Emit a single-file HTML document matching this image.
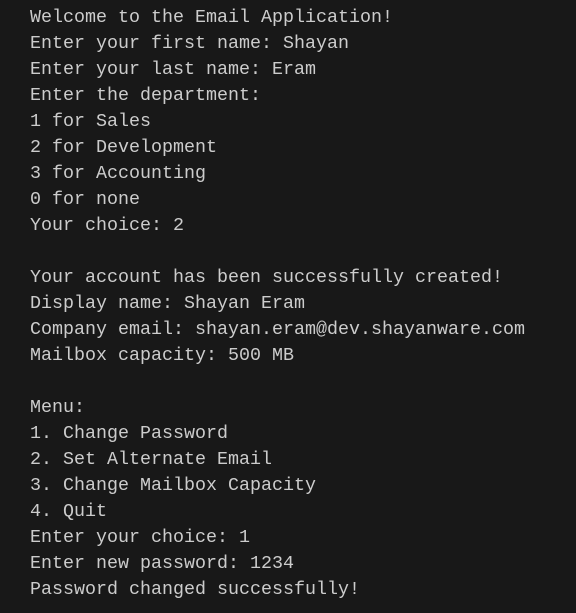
<!DOCTYPE html>
<html><head><style>
html,body{margin:0;padding:0;background:#181818;width:576px;height:613px;overflow:hidden}
pre{margin:0;position:absolute;left:30px;top:5px;font-family:"Liberation Mono",monospace;font-size:18.33px;line-height:26px;color:#cccccc}
</style></head><body>
<pre>Welcome to the Email Application!
Enter your first name: Shayan
Enter your last name: Eram
Enter the department:
1 for Sales
2 for Development
3 for Accounting
0 for none
Your choice: 2

Your account has been successfully created!
Display name: Shayan Eram
Company email: shayan.eram@dev.shayanware.com
Mailbox capacity: 500 MB

Menu:
1. Change Password
2. Set Alternate Email
3. Change Mailbox Capacity
4. Quit
Enter your choice: 1
Enter new password: 1234
Password changed successfully!</pre>
</body></html>
